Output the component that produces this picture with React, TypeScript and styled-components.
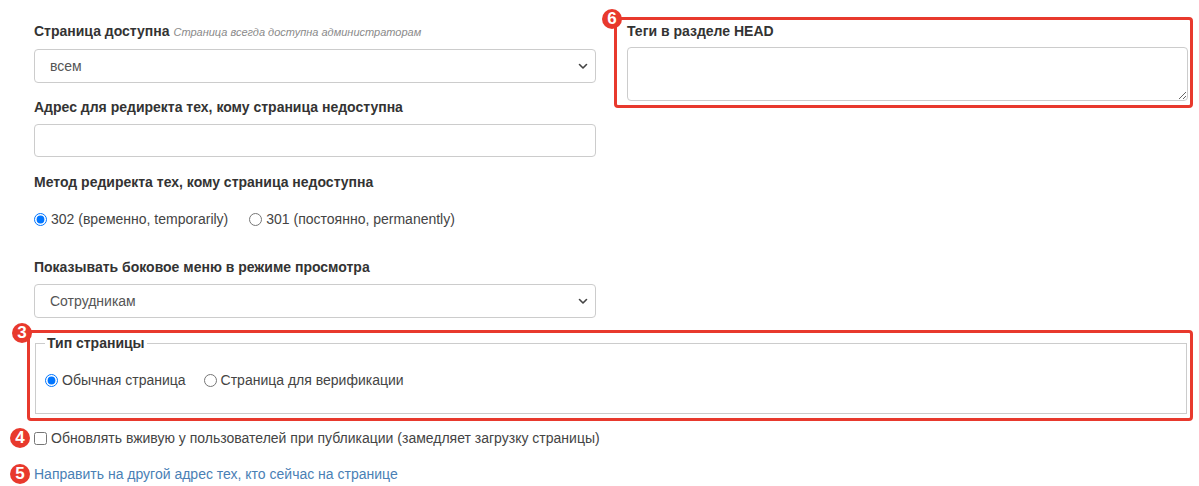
import React from 'react'
import styled, { createGlobalStyle } from 'styled-components'

const GlobalStyle = createGlobalStyle`
  html, body {
    margin: 0;
    padding: 0;
    background: #fff;
  }
  body {
    font-family: 'Liberation Sans', Arial, sans-serif;
    font-size: 14px;
    color: #333;
  }
`

const Page = styled.div`
  padding: 17px 6px 0 34px;
  width: 1199px;
  box-sizing: border-box;
`

const TopGrid = styled.div`
  display: grid;
  grid-template-columns: 562px 1fr;
  column-gap: 18px;
  align-items: start;
`

const LeftCol = styled.div`
  display: flex;
  flex-direction: column;
  padding-top: 4px;
`

const Label = styled.div<{ $gap?: number }>`
  font-weight: bold;
  font-size: 14px;
  line-height: 20px;
  color: #333;
  margin-top: ${p => p.$gap ?? 0}px;
  white-space: nowrap;
`

const Hint = styled.span`
  font-weight: normal;
  font-style: italic;
  font-size: 11px;
  color: #8a8a8a;
`

const SelectWrap = styled.div`
  position: relative;
  margin-top: 7px;
  height: 34px;
`

const Select = styled.select`
  appearance: none;
  width: 100%;
  height: 100%;
  box-sizing: border-box;
  border: 1px solid #ccc;
  border-radius: 4px;
  background: #fff;
  padding: 0 30px 0 15px;
  font-family: inherit;
  font-size: 14px;
  color: #555;
  outline: none;
`

const Chevron = styled.svg`
  position: absolute;
  right: 8px;
  top: 13px;
  width: 10px;
  height: 8px;
  pointer-events: none;
`

const TextInput = styled.input`
  margin-top: 7px;
  height: 33px;
  box-sizing: border-box;
  border: 1px solid #ccc;
  border-radius: 4px;
  padding: 0 15px;
  font-family: inherit;
  font-size: 14px;
  outline: none;
`

const RadioRow = styled.div<{ $gap: number; $top: number }>`
  display: flex;
  align-items: center;
  gap: ${p => p.$gap}px;
  margin-top: ${p => p.$top}px;
  height: 20px;
`

const Choice = styled.label`
  display: inline-flex;
  align-items: center;
  font-size: 14px;
  color: #444;
  white-space: nowrap;
  input {
    width: 13px;
    height: 13px;
    margin: 0 4px 0 0;
  }
`

const Highlight = styled.div`
  position: relative;
  border: 3px solid #e8392d;
  border-radius: 4px;
`

const HeadBox = styled(Highlight)`
  padding: 1px 2px 4px 10px;
  display: flex;
  flex-direction: column;
`

const Textarea = styled.textarea`
  margin-top: 6px;
  height: 54px;
  box-sizing: border-box;
  border: 1px solid #ccc;
  border-radius: 4px;
  resize: vertical;
  font-family: inherit;
  outline: none;
`

const TypeBox = styled(Highlight)`
  margin: 12px 0 0 -7px;
  padding: 0 3px 4px 5px;
`

const Fieldset = styled.fieldset`
  margin: 0;
  border: 1px solid #ccc;
  padding: 0 9px 23px 9px;
  legend {
    padding: 0 2px;
    font-weight: bold;
    font-size: 14px;
    line-height: 20px;
    color: #333;
  }
`

const Badge = styled.span<{ $left: number; $top: number }>`
  position: absolute;
  left: ${p => p.$left}px;
  top: ${p => p.$top}px;
  width: 20px;
  height: 20px;
  border-radius: 50%;
  background: #e8392d;
  color: #fff;
  font-family: 'Liberation Sans', Arial, sans-serif;
  font-weight: bold;
  font-size: 17px;
  line-height: 20px;
  text-align: center;
`

const Row = styled.div<{ $top: number }>`
  position: relative;
  display: flex;
  align-items: center;
  height: 20px;
  margin-top: ${p => p.$top}px;
`

const Link = styled.a`
  color: #4a7fb5;
  font-size: 14px;
  text-decoration: none;
  cursor: pointer;
`

const ChevronIcon = () => (
  <Chevron viewBox="0 0 10 8">
    <path d="M1.5 2.5 L5 6 L8.5 2.5" fill="none" stroke="#444" strokeWidth="1.6" strokeLinecap="round" strokeLinejoin="round" />
  </Chevron>
)

export default function App() {
  return (
    <Page>
      <GlobalStyle />
      <TopGrid>
        <LeftCol>
          <Label>
            Страница доступна <Hint>Страница всегда доступна администраторам</Hint>
          </Label>
          <SelectWrap>
            <Select defaultValue="all">
              <option value="all">всем</option>
            </Select>
            <ChevronIcon />
          </SelectWrap>

          <Label $gap={14}>Адрес для редиректа тех, кому страница недоступна</Label>
          <TextInput type="text" />

          <Label $gap={15}>Метод редиректа тех, кому страница недоступна</Label>
          <RadioRow $gap={21} $top={17}>
            <Choice>
              <input type="radio" name="method" defaultChecked />
              302 (временно, temporarily)
            </Choice>
            <Choice>
              <input type="radio" name="method" />
              301 (постоянно, permanently)
            </Choice>
          </RadioRow>

          <Label $gap={28}>Показывать боковое меню в режиме просмотра</Label>
          <SelectWrap>
            <Select defaultValue="staff">
              <option value="staff">Сотрудникам</option>
            </Select>
            <ChevronIcon />
          </SelectWrap>
        </LeftCol>

        <HeadBox>
          <Badge $left={-15} $top={-11}>6</Badge>
          <Label>Теги в разделе HEAD</Label>
          <Textarea />
        </HeadBox>
      </TopGrid>

      <TypeBox>
        <Badge $left={-18} $top={-10}>3</Badge>
        <Fieldset>
          <legend>Тип страницы</legend>
          <RadioRow $gap={18} $top={17}>
            <Choice>
              <input type="radio" name="ptype" defaultChecked />
              Обычная страница
            </Choice>
            <Choice>
              <input type="radio" name="ptype" />
              Страница для верификации
            </Choice>
          </RadioRow>
        </Fieldset>
      </TypeBox>

      <Row $top={7}>
        <Badge $left={-24} $top={0}>4</Badge>
        <Choice>
          <input type="checkbox" />
          Обновлять вживую у пользователей при публикации (замедляет загрузку страницы)
        </Choice>
      </Row>

      <Row $top={16}>
        <Badge $left={-24} $top={0}>5</Badge>
        <Link>Направить на другой адрес тех, кто сейчас на странице</Link>
      </Row>
    </Page>
  )
}
